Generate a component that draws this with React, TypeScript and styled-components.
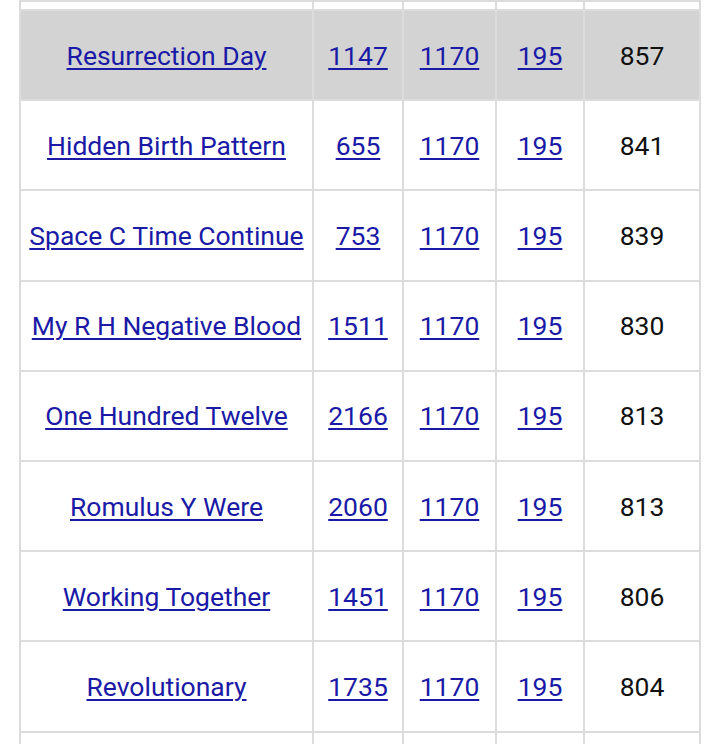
import { createGlobalStyle, styled } from 'styled-components';

const GlobalStyles = createGlobalStyle`
  html, body {
    margin: 0;
    padding: 0;
    background: #fff;
    font-family: Roboto, "Noto Sans", sans-serif;
  }
`;

type Row = {
  phrase: string;
  a: number;
  b: number;
  c: number;
  score: number;
};

const rows: Row[] = [
  { phrase: 'Resurrection Day', a: 1147, b: 1170, c: 195, score: 857 },
  { phrase: 'Hidden Birth Pattern', a: 655, b: 1170, c: 195, score: 841 },
  { phrase: 'Space C Time Continue', a: 753, b: 1170, c: 195, score: 839 },
  { phrase: 'My R H Negative Blood', a: 1511, b: 1170, c: 195, score: 830 },
  { phrase: 'One Hundred Twelve', a: 2166, b: 1170, c: 195, score: 813 },
  { phrase: 'Romulus Y Were', a: 2060, b: 1170, c: 195, score: 813 },
  { phrase: 'Working Together', a: 1451, b: 1170, c: 195, score: 806 },
  { phrase: 'Revolutionary', a: 1735, b: 1170, c: 195, score: 804 },
];

const widths = [293, 90, 93, 88, 116];

function App() {
  return (
    <>
      <GlobalStyles />
      <Page>
        <Table>
          <colgroup>
            {widths.map((w, i) => (
              <col key={i} style={{ width: w }} />
            ))}
          </colgroup>
          <tbody>
            <EdgeRow $height={9}>
              {widths.map((_, i) => (
                <Cell key={i} />
              ))}
            </EdgeRow>
            {rows.map((r, i) => (
              <DataRow key={r.phrase} $highlight={i === 0}>
                <Cell>
                  <Link href="#">{r.phrase}</Link>
                </Cell>
                <Cell>
                  <Link href="#">{r.a}</Link>
                </Cell>
                <Cell>
                  <Link href="#">{r.b}</Link>
                </Cell>
                <Cell>
                  <Link href="#">{r.c}</Link>
                </Cell>
                <Cell>{r.score}</Cell>
              </DataRow>
            ))}
            <EdgeRow $height={40}>
              {widths.map((_, i) => (
                <Cell key={i} />
              ))}
            </EdgeRow>
          </tbody>
        </Table>
      </Page>
    </>
  );
}

const Page = styled.div`
  height: 744px;
  overflow: hidden;
  padding-left: 19px;
`;

const Table = styled.table`
  border-collapse: collapse;
  table-layout: fixed;
  width: 682px;
`;

const DataRow = styled.tr<{ $highlight?: boolean }>`
  height: 90.2px;
  background: ${(p) => (p.$highlight ? '#d3d3d3' : '#fff')};
`;

const EdgeRow = styled.tr<{ $height: number }>`
  height: ${(p) => p.$height}px;
`;

const Cell = styled.td`
  border: 2px solid #dcdcdc;
  padding: 0;
  text-align: center;
  vertical-align: middle;
  font-size: 26.5px;
  color: #111;
  white-space: nowrap;
`;

const Link = styled.a`
  color: #1a1aa6;
  text-decoration: underline;
  text-underline-offset: 3px;
  text-decoration-thickness: 2px;
`;

export default App;
